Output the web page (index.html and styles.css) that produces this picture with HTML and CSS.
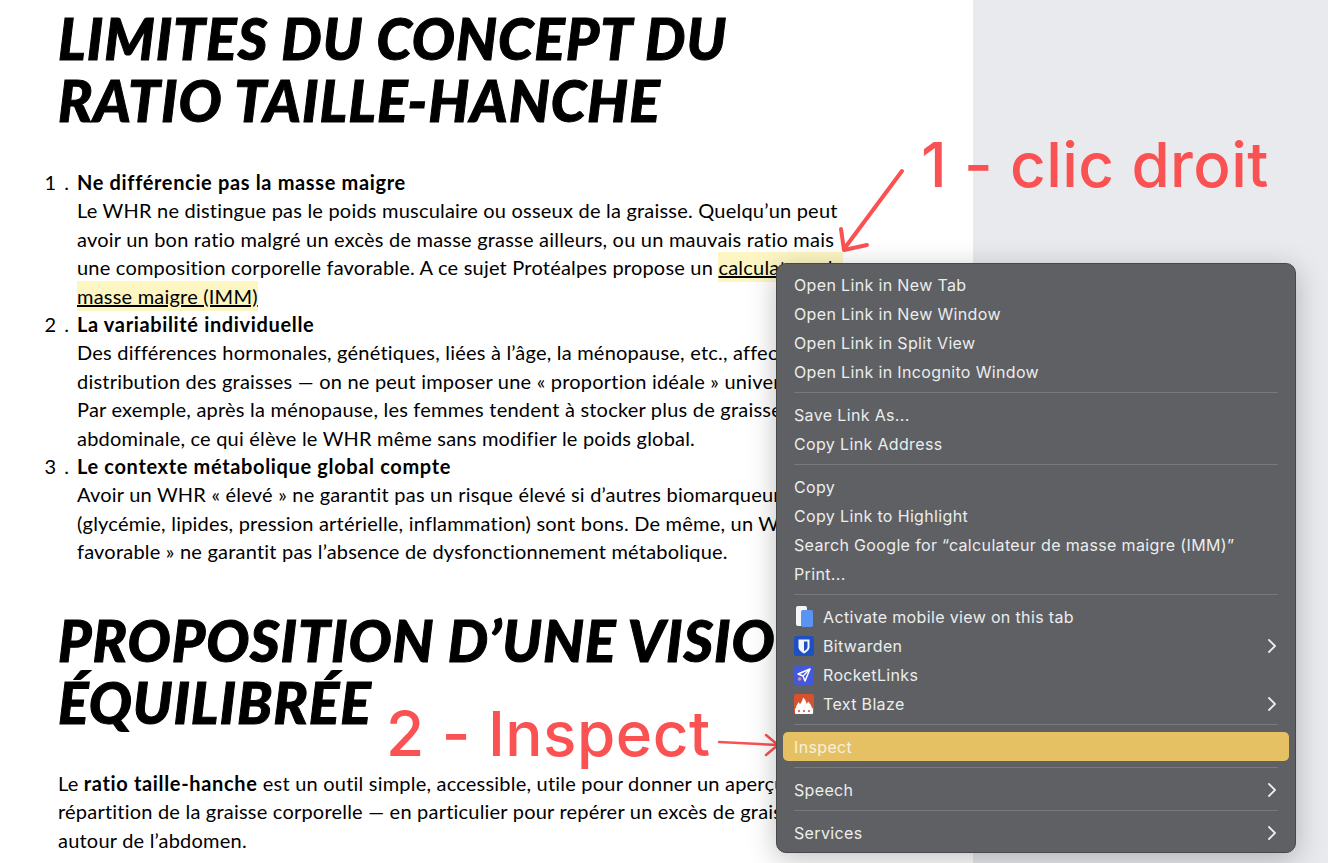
FILE: index.html
```html
<!DOCTYPE html>
<html lang="fr">
  <head>
    <meta charset="UTF-8" />
    <title>Limites du ratio taille-hanche</title>
    <link rel="stylesheet" href="styles.css">
  </head>
  <body>
    <div class="page">
      <main class="article">
        <h2 class="first">Limites du concept du<br />ratio taille-hanche</h2>
        <ol class="limits">
          <li>
            <strong>Ne différencie pas la masse maigre</strong><br />
            Le WHR ne distingue pas le poids musculaire ou osseux de la graisse. Quelqu’un peut<br />
            avoir un bon ratio malgré un excès de masse grasse ailleurs, ou un mauvais ratio mais<br />
            une composition corporelle favorable. A ce sujet Protéalpes propose un <a href="#">calculateur de<br />masse maigre (IMM)</a>
          </li>
          <li>
            <strong>La variabilité individuelle</strong><br />
            Des différences hormonales, génétiques, liées à l’âge, la ménopause, etc., affectent la<br />
            distribution des graisses — on ne peut imposer une « proportion idéale » universelle.<br />
            Par exemple, après la ménopause, les femmes tendent à stocker plus de graisse<br />
            abdominale, ce qui élève le WHR même sans modifier le poids global.
          </li>
          <li>
            <strong>Le contexte métabolique global compte</strong><br />
            Avoir un WHR « élevé » ne garantit pas un risque élevé si d’autres biomarqueurs<br />
            (glycémie, lipides, pression artérielle, inflammation) sont bons. De même, un WHR «<br />
            favorable » ne garantit pas l’absence de dysfonctionnement métabolique.
          </li>
        </ol>
        <h2>Proposition d’une vision<br />équilibrée</h2>
        <p class="outro">
          Le <strong>ratio taille-hanche</strong> est un outil simple, accessible, utile pour donner un aperçu de la<br />
          répartition de la graisse corporelle — en particulier pour repérer un excès de graisse<br />
          autour de l’abdomen.
        </p>
      </main>
      <aside class="side"></aside>
    </div>

    <!-- annotations -->
    <div class="note note-1">1 - clic droit</div>
    <div class="note note-2">2 - Inspect</div>
    <svg class="arrows" width="1328" height="863" viewBox="0 0 1328 863" fill="none" stroke="#fa5252" stroke-linecap="round" stroke-linejoin="round">
      <path stroke-width="4" d="M902 171 L844 249 M841 229 L844 250 L867 245" />
      <path stroke-width="2.5" d="M719 742 L778 745 M766 735 L778 745 L766 755" />
    </svg>

    <!-- menu contextuel -->
    <nav class="menu">
      <div class="row">Open Link in New Tab</div>
      <div class="row">Open Link in New Window</div>
      <div class="row">Open Link in Split View</div>
      <div class="row">Open Link in Incognito Window</div>
      <div class="sep"></div>
      <div class="row">Save Link As...</div>
      <div class="row">Copy Link Address</div>
      <div class="sep"></div>
      <div class="row">Copy</div>
      <div class="row">Copy Link to Highlight</div>
      <div class="row">Search Google for “calculateur de masse maigre (IMM)”</div>
      <div class="row">Print...</div>
      <div class="sep"></div>
      <div class="row">
        <svg class="ico" viewBox="0 0 20 22"><rect x="2" y="0" width="11" height="20" rx="2" fill="#f4f5f7"/><rect x="7" y="4" width="12" height="17" rx="2" fill="#5b93f0"/></svg>
        Activate mobile view on this tab
      </div>
      <div class="row">
        <svg class="ico" viewBox="0 0 20 22"><rect x="0" y="1" width="20" height="20" rx="3" fill="#1f4fc4"/><path d="M4.5 4.5h11v7.5c0 3-2.800 5-5.500 6.500-2.700-1.500-5.500-3.500-5.500-6.500z" fill="#f4f6fb"/><path d="M10 6.500h3.500v5.500c0 1.800-1.700 3.200-3.500 4.200z" fill="#1f4fc4"/></svg>
        Bitwarden
        <svg class="chev" viewBox="0 0 10 16"><path d="M2 2l6 6-6 6" fill="none" stroke="#eceded" stroke-width="1.800" stroke-linecap="round" stroke-linejoin="round"/></svg>
      </div>
      <div class="row">
        <svg class="ico" viewBox="0 0 20 22"><rect x="0" y="1" width="20" height="20" rx="3" fill="#4458dc"/><path d="M16 5 L4 10 L9 12 L11 17z" fill="none" stroke="#fff" stroke-width="1.500" stroke-linejoin="round"/><path d="M9 12L16 5" stroke="#fff" stroke-width="1.200"/><circle cx="5.500" cy="15" r="1.800" fill="#e58aa0"/></svg>
        RocketLinks
      </div>
      <div class="row">
        <svg class="ico" viewBox="0 0 20 22"><rect x="0" y="1" width="20" height="20" rx="2" fill="#d9502e"/><path d="M2 15c0-2.500 1.500-3.500 2.500-6 .8.800 1.200 1.600 1.300 2.500 1.500-2 2.700-3.500 3.200-7 2.500 1.800 3.500 4.500 3.500 6.500.8-.6 1.200-1.400 1.500-2.500 2 2 3.500 4 4 6.500z" fill="#fff"/><rect x="1" y="15" width="18" height="6" rx="1" fill="#fff"/><circle cx="5" cy="18" r="1.100" fill="#d9502e"/><circle cx="10" cy="18" r="1.100" fill="#d9502e"/><circle cx="15" cy="18" r="1.100" fill="#d9502e"/></svg>
        Text Blaze
        <svg class="chev" viewBox="0 0 10 16"><path d="M2 2l6 6-6 6" fill="none" stroke="#eceded" stroke-width="1.800" stroke-linecap="round" stroke-linejoin="round"/></svg>
      </div>
      <div class="sep"></div>
      <div class="row active">Inspect</div>
      <div class="sep"></div>
      <div class="row">
        Speech
        <svg class="chev" viewBox="0 0 10 16"><path d="M2 2l6 6-6 6" fill="none" stroke="#eceded" stroke-width="1.800" stroke-linecap="round" stroke-linejoin="round"/></svg>
      </div>
      <div class="sep"></div>
      <div class="row">
        Services
        <svg class="chev" viewBox="0 0 10 16"><path d="M2 2l6 6-6 6" fill="none" stroke="#eceded" stroke-width="1.800" stroke-linecap="round" stroke-linejoin="round"/></svg>
      </div>
    </nav>
  </body>
</html>
```

FILE: styles.css
```css
* {
  margin: 0;
  padding: 0;
  box-sizing: border-box;
}
body {
  width: 1328px;
  height: 863px;
  overflow: hidden;
  font-family: "Lato", "Liberation Sans", sans-serif;
  color: #000;
  background-color: #fff;
}
.page {
  display: flex;
  height: 863px;
}
.article {
  width: 973px;
  padding-left: 58px;
  white-space: nowrap;
  font-size: 20px;
  letter-spacing: 0.21px;
  line-height: 28.4px;
  overflow: hidden;
}
.side {
  flex: 1;
  background-color: #e9eaee;
}

/* ===titres=== */
h2 {
  font-size: 57px;
  line-height: 62px;
  font-weight: 900;
  font-style: italic;
  letter-spacing: 1px;
  -webkit-text-stroke: 1px #000;
  text-transform: uppercase;
  margin-top: 43px;
  margin-bottom: 36px;
}
h2.first {
  margin-top: 7px;
  margin-bottom: 37px;
}

/* ===liste=== */
.limits {
  padding-left: 19px;
}
.limits li::marker {
  content: counter(list-item) " . ";
  letter-spacing: 1.5px;
}
.article strong {
  font-weight: 700;
  letter-spacing: 0.65px;
}
.article a {
  color: #000;
  text-decoration: underline;
  background-color: #fdf6c3;
  padding: 3px 0;
}

/* ===annotations=== */
.note {
  position: absolute;
  font-family: "Inter", "Liberation Sans", sans-serif;
  color: #fa5252;
  font-weight: 500;
  white-space: nowrap;
}
.note-1 {
  left: 921px;
  top: 127px;
  font-size: 62px;
  letter-spacing: 0.4px;
  line-height: 75px;
}
.note-2 {
  left: 386px;
  top: 696px;
  font-size: 62px;
  letter-spacing: 0.5px;
  line-height: 75px;
}
.arrows {
  position: absolute;
  left: 0;
  top: 0;
}

/* ===menu=== */
.menu {
  position: absolute;
  left: 776px;
  top: 263px;
  width: 520px;
  height: 590px;
  padding: 6px 6px;
  background-color: #5e6063;
  border: 1px solid #46484a;
  border-radius: 10px;
  box-shadow: 0 6px 28px rgba(0, 0, 0, 0.25);
  font-family: "Inter", "Liberation Sans", sans-serif;
  font-size: 16px;
  letter-spacing: 0.35px;
  color: #eceded;
}
.row {
  display: flex;
  align-items: center;
  height: 29px;
  padding: 0 11px;
  border-radius: 5px;
  white-space: nowrap;
}
.row.active {
  background-color: #e6c163;
  color: #f5f0dd;
}
.sep {
  height: 1px;
  margin: 6px 11px 7px;
  background-color: #77797c;
}
.ico {
  width: 20px;
  height: 22px;
  margin-right: 9px;
}
.chev {
  width: 10px;
  height: 16px;
  margin-left: auto;
  margin-right: 1px;
}
```
